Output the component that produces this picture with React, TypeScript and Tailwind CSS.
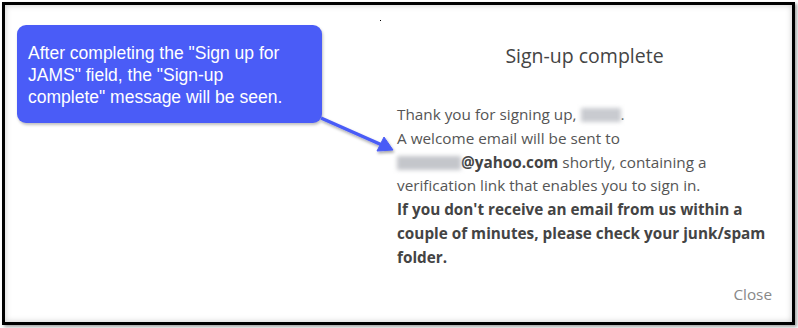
export default function App() {
  return (
    <div className="relative h-[328px] w-[798px] overflow-hidden bg-white">
      <div className="ml-[2px] mt-[2px] flex h-[323px] w-[793px] border-[3px] border-black shadow-[inset_0_0_6px_rgba(0,0,0,0.22),2px_2px_3px_rgba(0,0,0,0.35)]">
        <div className="w-[375px] shrink-0 pl-[12px] pt-[20px]">
          <div
            className="h-[98px] w-[305px] rounded-[9px] bg-[#4a5cf7] pl-[11px] pt-[17px] text-[17.5px] leading-[22px] text-white shadow-[1px_2px_3px_rgba(0,0,0,0.25)]"
            style={{ fontFamily: '"Liberation Sans", Arial, sans-serif' }}
          >
            After completing the "Sign up for
            <br />
            JAMS" field, the "Sign-up
            <br />
            complete" message will be seen.
          </div>
        </div>

        <div
          className="relative flex flex-1 flex-col pl-[17px] pr-[20px] text-[#555]"
          style={{ fontFamily: '"Open Sans", sans-serif' }}
        >
          <span className="absolute left-0 top-[15px] h-[1px] w-[1px] bg-black" />
          <h2 className="pt-[38px] text-center text-[19.5px] leading-[26px] text-[#444]">
            Sign-up complete
          </h2>
          <div className="mt-[34px] text-[15.3px] leading-[23.8px]">
            <p>
              Thank you for signing up,{' '}
              <span className="inline-block h-[14px] w-[40px] translate-y-[2px] bg-[#c9cbd0] blur-[2px]" />.
            </p>
            <p>A welcome email will be sent to</p>
            <p>
              <span className="inline-block h-[14px] w-[64px] translate-y-[2px] bg-[#c4c6cb] blur-[2px]" />
              <b className="text-[#444]">@yahoo.com</b> shortly, containing a
            </p>
            <p>verification link that enables you to sign in.</p>
            <p className="font-bold text-[#444]">
              If you don't receive an email from us within a couple of minutes, please check your junk/spam
              folder.
            </p>
          </div>
          <div className="mt-auto mb-[16px] text-right text-[15.3px] text-[#888]">Close</div>
        </div>
      </div>

      <svg className="pointer-events-none absolute left-0 top-0" width="798" height="328">
        <defs>
          <filter id="sh" x="-20%" y="-20%" width="140%" height="160%">
            <feDropShadow dx="1" dy="2" stdDeviation="1.5" floodColor="#000" floodOpacity="0.35" />
          </filter>
        </defs>
        <g filter="url(#sh)" fill="#4a5cf7" stroke="#4a5cf7">
          <line x1="321" y1="118" x2="382" y2="145" strokeWidth="3.5" />
          <path d="M393 150 L377 151 L384 137 Z" strokeWidth="1" strokeLinejoin="round" />
        </g>
      </svg>
    </div>
  )
}
